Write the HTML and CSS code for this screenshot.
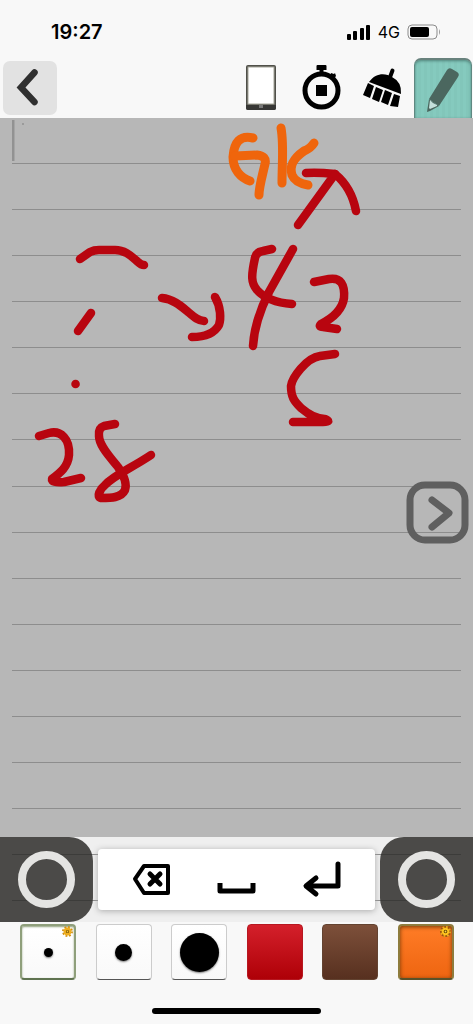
FILE: index.html
```html
<!DOCTYPE html>
<html lang="en">
<head>
<meta charset="utf-8">
<meta name="viewport" content="width=device-width, initial-scale=1">
<title>Notepad</title>
<link rel="stylesheet" href="styles.css">
</head>
<body>
<header class="top">
  <div class="status">
    <time class="clock">19:27</time>
    <div class="signal">
      <svg width="24" height="16" viewBox="0 0 24 16" aria-hidden="true"><rect x="0" y="10" width="4" height="6" rx="1"/><rect x="6" y="7" width="4" height="9" rx="1"/><rect x="13" y="4" width="4" height="12" rx="1"/><rect x="19" y="1" width="4" height="15" rx="1"/></svg>
      <span class="network">4G</span>
      <svg width="34" height="16" viewBox="0 0 34 16" aria-hidden="true"><rect x="1" y="1" width="29" height="14" rx="4" fill="none" stroke="#8b8b8b"/><rect x="3" y="3" width="19" height="10" rx="2"/><path d="M32 5q2 3 0 6z" fill="#999"/></svg>
    </div>
  </div>
  <nav class="tools">
    <button class="back" aria-label="Back"><svg width="54" height="54" viewBox="0 0 54 54"><path d="M31.500 11.500L18 26.500L31.500 41" fill="none" stroke="#303030" stroke-width="6.500" stroke-linecap="round" stroke-linejoin="miter"/></svg></button>
    <button class="tool" aria-label="Page">
      <svg width="60" height="60" viewBox="0 0 60 60"><rect x="17" y="7" width="30" height="45" rx="2" fill="#50504a"/><rect x="19" y="9" width="26" height="37" fill="#fff" stroke="#a5a599"/><path d="M17 47h30v3q0 2-2 2H19q-2 0-2-2z" fill="#373735"/><rect x="30" y="47" width="4" height="3" fill="#777"/></svg>
    </button>
    <button class="tool" aria-label="Timer">
      <svg width="60" height="60" viewBox="0 0 60 60"><circle cx="32.500" cy="32.500" r="16.500" fill="none" stroke="#000" stroke-width="5"/><path d="M28.500 7h8q1 0 1 1v4h-3v5h-4v-5h-3V8q0-1 1-1z"/><path d="M41 18l1-3 3 1 1-1 1 3-3 4z"/><rect x="27" y="27" width="11" height="11"/></svg>
    </button>
    <button class="tool" aria-label="Clear">
      <svg width="60" height="60" viewBox="0 0 60 60"><path d="M43.500 12.500l-3 8" stroke="#000" stroke-width="4" stroke-linecap="round"/><path d="M20 24C27 14 37 15 43 19Q53 24 52 36Z"/><path d="M19 25l6 3-4 12-7-3zM27 29l7 3-4 12-7-3zM36 32l7 3-4 12-7-3zM45 36l6 2-2 11-8-1z"/></svg>
    </button>
    <button class="tool pencil" aria-label="Draw" aria-pressed="true">
      <svg width="56" height="58" viewBox="0 0 56 58"><g transform="translate(-415 -60)"><path d="M447 69q2-3 5-1l5 3q3 2 1 5l-19 29-10-7z" fill="#4b675f"/><path d="M429 98l10 7-9 5-3 1z" fill="#4b675f"/><path d="M430 99l3 3 4 2v1l-7 3-1-1z" fill="#c3e0db"/></g></svg>
    </button>
  </nav>
</header>

<main class="page">
  <svg class="rules" aria-hidden="true">
    <path d="M1 2v41" stroke="#929292" stroke-width="3"/><circle cx="11" cy="6" r="1" fill="#929292"/>
    <g stroke="#8d8d8d">
      <line x1="0" x2="100%" y1="45.500" y2="45.500"/><line x1="0" x2="100%" y1="91.500" y2="91.500"/><line x1="0" x2="100%" y1="137.500" y2="137.500"/><line x1="0" x2="100%" y1="183.500" y2="183.500"/><line x1="0" x2="100%" y1="229.500" y2="229.500"/><line x1="0" x2="100%" y1="275.500" y2="275.500"/><line x1="0" x2="100%" y1="321.500" y2="321.500"/><line x1="0" x2="100%" y1="368.500" y2="368.500"/><line x1="0" x2="100%" y1="414.500" y2="414.500"/><line x1="0" x2="100%" y1="460.500" y2="460.500"/><line x1="0" x2="100%" y1="506.500" y2="506.500"/><line x1="0" x2="100%" y1="552.500" y2="552.500"/><line x1="0" x2="100%" y1="598.500" y2="598.500"/><line x1="0" x2="100%" y1="644.500" y2="644.500"/><line x1="0" x2="100%" y1="690.500" y2="690.500"/>
    </g>
  </svg>
  <svg class="ink" width="400" height="420" viewBox="0 118 400 420" role="img" aria-label="Handwritten notes">
    <g fill="none" stroke-linecap="round" stroke-linejoin="round">
      <g stroke="#ef650c" stroke-width="9">
        <path d="M253 138C240 135 234 142 233 157C233 170 241 178 250 181"/>
        <path d="M235 156L257 155Q267 156 265 164C262 177 259 187 259 195"/>
        <path d="M281 128C284 144 282 163 282 183"/>
        <path d="M314 143Q311 148 304 151C294 158 289 165 292 175C295 182 302 184 308 185"/>
      </g>
      <g stroke="#b8050f" stroke-width="8.500">
        <path d="M306 173C317 172 326 173 335 174L298 225"/>
        <path d="M335 174C346 183 353 195 356 211"/>
        <path d="M80 259L90 252Q94 250 99 250H115C126 250 132 257 138 262Q141 265 144 265"/>
        <path d="M78 331L91 313"/><path d="M75.500 384h.1"/>
        <path d="M162 298C173 299 181 306 187 311C194 317 198 321 204 321"/>
        <path d="M215 297C221 307 221 319 219 325C214 334 204 337 192 337"/>
        <path d="M272 249L263 251Q256 252 255 258C251 276 251 283 257 290C266 300 279 303 292 304"/>
        <path d="M293 249L269 292C258 314 254 329 253 346"/>
        <path d="M314 282L329 279C341 277 345 285 344 298C342 311 331 319 321 324Q318 327 323 327L337 329"/>
        <path d="M335 354L320 356C306 358 292 378 291 386C291 397 294 401 301 408C308 414 317 419 325 419C330 421 329 422 323 422L293 422"/>
        <path d="M39 436L49 433C61 430 70 439 69 455C68 467 60 473 52 479Q51 483 64 482L81 478"/>
        <path d="M115 424L104 426Q98 428 99 436C99 446 111 458 118 467C125 477 127 484 125 490C121 498 111 498 101 498C96 497 100 489 105 485C114 475 130 469 151 455"/>
      </g>
    </g>
  </svg>
  <button class="next" aria-label="Next page"><svg width="63" height="63" viewBox="0 0 63 63" fill="none" stroke="#5f5f5f"><rect x="4" y="4" width="55" height="55" rx="15" stroke-width="7"/><path d="M26 19L43 32L26 46" stroke-width="7" stroke-linecap="round" stroke-linejoin="round"/></svg></button>
</main>

<section class="keybar" aria-label="Keyboard">
  <button class="knob left" aria-label="Move cursor left"><span class="ring"></span></button>
  <div class="keys">
    <button class="key" aria-label="Delete"><svg width="40" height="40" viewBox="0 0 40 40" fill="none" stroke="#000" stroke-width="4"><path d="M3 19L12 6H36V33H12Z" stroke-linejoin="round"/><path d="M18 14l10 10M28 14L18 24" stroke-width="5" stroke-linecap="round"/></svg></button>
    <button class="key" aria-label="Space"><svg width="40" height="40" viewBox="0 0 40 40" fill="none" stroke="#000" stroke-width="5"><path d="M4 23v8h33v-8" stroke-linejoin="round"/></svg></button>
    <button class="key" aria-label="Enter"><svg width="40" height="40" viewBox="0 0 40 40" fill="none" stroke="#000" stroke-width="5" stroke-linecap="round" stroke-linejoin="round"><path d="M37 4v22H6M15 18l-10 8 10 8"/></svg></button>
  </div>
  <button class="knob right" aria-label="Move cursor right"><span class="ring"></span></button>
</section>

<footer class="bottom">
  <div class="swatches">
    <button class="swatch pen chosen" aria-label="Thin pen"><span class="dot small"></span><svg class="gear" viewBox="0 0 12 12"><circle cx="6" cy="6" r="5" fill="none" stroke="#cf9012" stroke-width="2" stroke-dasharray="2 1.927"/><circle cx="6" cy="6" r="3" fill="#604000" stroke="#efad1c" stroke-width="2.500"/><circle cx="6" cy="6" r="1" fill="#f8c32c"/></svg></button>
    <button class="swatch pen" aria-label="Medium pen"><span class="dot medium"></span></button>
    <button class="swatch pen" aria-label="Thick pen"><span class="dot large"></span></button>
    <button class="swatch red" aria-label="Red"></button>
    <button class="swatch brown" aria-label="Brown"></button>
    <button class="swatch orange chosen" aria-label="Orange"><svg class="gear" viewBox="0 0 12 12"><circle cx="6" cy="6" r="6" fill="#9a5010"/><circle cx="6" cy="6" r="5" fill="none" stroke="#efad1c" stroke-width="2" stroke-dasharray="2 1.927"/><circle cx="6" cy="6" r="3" fill="#604000" stroke="#ffc420" stroke-width="2"/><circle cx="6" cy="6" r="1" fill="#ffd84a"/></svg></button>
  </div>
  <div class="home"></div>
</footer>
</body>
</html>
```
FILE: styles.css
```css
* { box-sizing: border-box; }

body {
  margin: 0;
  min-height: 100vh;
  display: flex;
  flex-direction: column;
  background: #f8f8f8;
  font-family: Inter, "Liberation Sans", sans-serif;
  color: #000;
}

button {
  margin: 0;
  padding: 0;
  border: 0;
  background: none;
  cursor: pointer;
}

svg { display: block; }

.status {
  display: flex;
  justify-content: space-between;
  align-items: center;
  height: 58px;
  padding: 5px 32px 0 51px;
}

.clock {
  font-size: 20px;
  font-weight: 600;
}

.signal {
  display: flex;
  align-items: center;
  gap: 7px;
}

.network { font-size: 16px; }

.tools {
  display: flex;
  align-items: flex-start;
  height: 60px;
  padding: 0 1px 0 3px;
}

.back {
  margin: 3px auto 0 0;
  border-radius: 7px;
  background: #e2e2e2;
}

.tool {
  width: 60px;
  height: 60px;
}

.pencil {
  width: 58px;
  margin-left: 5px;
  padding-top: 1px;
  border: 1px solid #5f8881;
  border-top: 2px solid #68827d;
  border-bottom: 0;
  border-radius: 7px 7px 0 0;
  overflow: hidden;
  background: repeating-linear-gradient(90deg, #85cabe 0 3px, #82c6ba 3px 6px);
  box-shadow: inset 0 1px 3px #4f8279;
}

.page {
  position: relative;
  flex: 1 0 auto;
  min-height: 480px;
  background: #b7b7b7;
}

.rules {
  position: absolute;
  top: 0;
  left: 12px;
  width: calc(100% - 24px);
  height: 100%;
}

.ink { position: relative; }

.next {
  position: absolute;
  top: 363px;
  right: 4px;
}

.keybar {
  display: flex;
  height: 85px;
  background:
    linear-gradient(#8b8b8b, #8b8b8b) 12px 17px / calc(100% - 24px) 1px no-repeat,
    linear-gradient(#8b8b8b, #8b8b8b) 12px 63px / calc(100% - 24px) 1px no-repeat,
    #efefef;
}

.knob {
  display: grid;
  place-items: center;
  width: 93px;
  background:
    linear-gradient(#3c3c3a, #3c3c3a) 12px 17px / calc(100% - 12px) 1px no-repeat,
    linear-gradient(#3c3c3a, #3c3c3a) 12px 63px / calc(100% - 12px) 1px no-repeat,
    #4b4a48;
}

.left { border-radius: 0 24px 24px 0; }

.right {
  border-radius: 24px 0 0 24px;
  background-position: 0 17px, 0 63px, 0 0;
}

.ring {
  width: 57px;
  height: 57px;
  border: 8px solid #e4e4e2;
  border-radius: 50%;
}

.keys {
  flex: 1;
  display: flex;
  justify-content: space-around;
  margin: 12px 5px;
  padding: 0 12px;
  border-radius: 4px;
  background: #fff;
  box-shadow: 0 1px 6px #aaa;
}

.key {
  display: grid;
  place-items: center;
  width: 60px;
}

.bottom { height: 102px; }

.swatches {
  display: flex;
  justify-content: space-between;
  padding: 2px 19px 0 20px;
}

.swatch {
  position: relative;
  display: grid;
  place-items: center;
  width: 56px;
  height: 56px;
  border-radius: 4px;
}

.pen {
  border: 1px solid #ccc;
  border-bottom-color: #555;
  background: linear-gradient(#fff, #f9f9f9);
}

.pen.chosen {
  border: 2px solid #8f9f7b;
  border-bottom-color: #5f7350;
  box-shadow: inset 0 1px 2px #8f9f7b;
}

.red {
  border: 1px solid #b71821;
  background: linear-gradient(#d4202b, #ae0007);
}

.brown {
  border: 1px solid #634331;
  background: linear-gradient(#7d503a, #57301f);
}

.orange {
  border: 2px solid #8e7c3d;
  border-bottom-color: #59522a;
  background: linear-gradient(#ff7c26, #ee6511);
  box-shadow: inset 0 1px 4px #713807;
}

.dot {
  border-radius: 50%;
  background: #000;
  box-shadow: 0 1px 2px #777;
}

.small { width: 9px; height: 9px; }
.medium { width: 17px; height: 17px; }
.large { width: 39px; height: 39px; }

.gear {
  position: absolute;
  top: 0;
  right: 1px;
  width: 11px;
  height: 11px;
}

.home {
  width: 169px;
  height: 6px;
  margin: 28px auto 0;
  border-radius: 3px;
  background: #000;
}
```
